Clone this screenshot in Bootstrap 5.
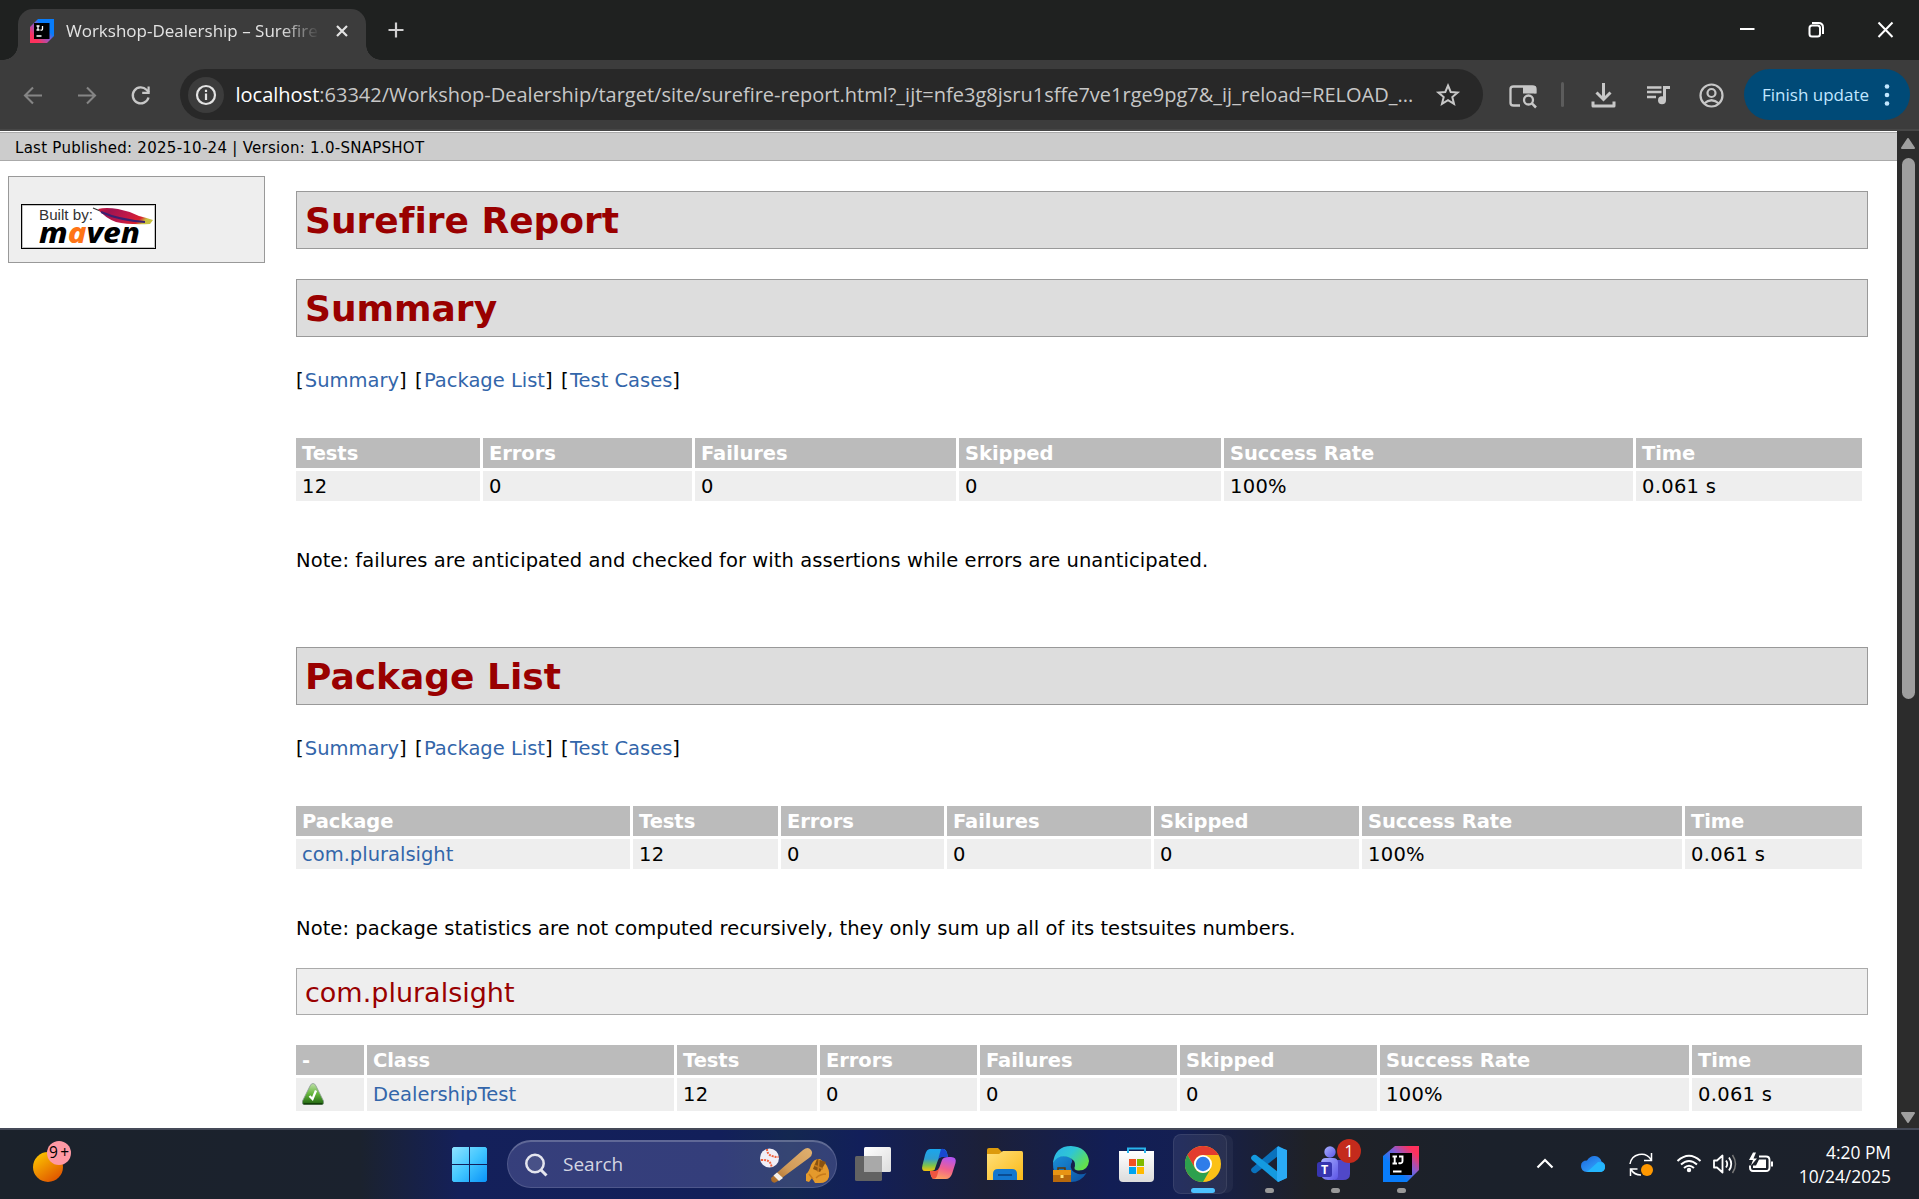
<!DOCTYPE html>
<html lang="en">
<head>
<meta charset="utf-8">
<title>Workshop-Dealership – Surefire Report</title>
<link href="https://cdn.jsdelivr.net/npm/bootstrap@5.3.0/dist/css/bootstrap.min.css" rel="stylesheet">
<style>
html,body{height:1199px;overflow:hidden}
body{font-family:"Open Sans","Noto Sans",sans-serif;color:#000;background:#fff;width:1919px}
svg{display:block;flex:none}
/* browser chrome */
.tabstrip{height:60px;background:#1f2120;padding-left:3px}
.flare{width:15px;height:15px;flex:none}
.flare-l{background:radial-gradient(circle at 0 0,#1f2120 14.5px,#3c3c3c 15px)}
.flare-r{background:radial-gradient(circle at 100% 0,#1f2120 14.5px,#3c3c3c 15px)}
.browser-tab{width:348px;height:51px;background:#3c3c3c;border-radius:15px 15px 0 0;padding:0 17px 8px 12px}
.tab-title{width:254px;margin-left:12px;font-size:17px;color:#e3e3e3;white-space:nowrap;overflow:hidden;-webkit-mask-image:linear-gradient(90deg,#000 215px,transparent 254px);mask-image:linear-gradient(90deg,#000 215px,transparent 254px)}
.toolbar{height:71px;background:#3c3c3c;border-bottom:2px solid #474747;padding:0 9px 0 7px}
.omnibox{width:1303px;height:51px;border-radius:26px;background:#282828;margin-left:12px;padding:0 13px 0 8px}
.info-chip{width:36px;height:36px;border-radius:50%;background:#3c3c3c}
.address{font-size:20px;color:#c7c7c7;margin-left:11.5px;white-space:nowrap}
.address span{color:#fff}
.lens{margin-left:18px}
.bar-divider{width:3px;height:25px;border-radius:2px;background:#5c5c5c;margin:0 17px 0 16px}
.finish{width:166px;height:51px;border-radius:26px;background:#004a77;color:#c2e7ff;font-size:17px;padding:0 18px}
/* report */
.viewport{height:997px}
.report{font-family:"DejaVu Sans",Verdana,sans-serif;font-size:19.5px;line-height:29px;padding-top:1px;letter-spacing:.06px;overflow:hidden;font-variant-ligatures:none}
.crumbs{height:29px;background:#ccc;border:solid #aaa;border-width:1px 0;font-size:15px;letter-spacing:.27px;line-height:30px;padding-left:15px}
.side-panel{width:257px;height:87px;background:#eee;border:1px solid #999;margin:15px 0 0 8px;padding:27px 0 0 12px}
.content{width:1572px;margin-left:31px;padding-top:30px}
.sec{height:58px;margin:0 0 30px;border:1px solid #999;background:#ddd;color:#900;font-size:36px;font-weight:700;line-height:58px;padding-left:8px;letter-spacing:0}
.sec-next{margin-top:72px}
.pkg{height:47px;margin:25px 0 30px;border:1px solid #aaa;background:#eee;color:#900;font-size:27px;font-weight:400;line-height:47px;padding-left:8px;letter-spacing:0}
.jump{margin:-1px 0 43px;letter-spacing:0}
.jump b{font-weight:400;letter-spacing:1.15px}
.report a{color:#36a;text-decoration:none}
.note{margin:45px 0 0}
.grid{table-layout:fixed;border-collapse:separate;border-spacing:3px;margin:-3px;width:1572px}
.grid th,.grid td{height:30px;padding:1px 6px 0;line-height:29px;white-space:nowrap}
.grid th{background:#bbb;color:#fff;letter-spacing:-.06px}
.grid td{background:#eee;letter-spacing:.3px}
.grid td a{letter-spacing:0}
.grid.tall td{height:33px;padding-bottom:2px}
.scroll{width:22px;background:#2c2c2c;padding:7px 0 5px}
.thumb{width:13px;height:541px;border-radius:7px;background:#9f9f9f;margin-top:9px}
/* taskbar */
.taskbar{height:71px;border-top:2px solid #454a58;padding:0 28px 1px 32px;background:linear-gradient(90deg,#1b222b 0,#1b222e 360px,#14205a 460px,#121f5a 720px,#132750 790px,#121f5a 860px,#1c2038 985px,#121e55 1110px,#141f52 1180px,#1f2126 1310px,#1b212b 1480px,#1c212b 100%)}
.weather{width:40px;height:45px;margin:0 380px 5px 0}
.search-pill{width:330px;height:48px;border-radius:24px;background:rgba(190,190,255,.2);border:1px solid #ffffff22;border-top:2px solid #ffffff38;margin:0 18px 0 20px;padding:0 6px 0 16px;color:#d4d6e2;font-size:19px;gap:15px}
.app{position:relative;width:36px;height:60px;margin-right:30px}
.app.running::after{content:"";position:absolute;left:14px;bottom:1px;width:9px;height:5px;border-radius:3px;background:#999}
.app.active::before{content:"";position:absolute;left:-12px;top:0;width:54px;height:60px;border-radius:8px;background:#ffffff14;border:1px solid #ffffff14;box-shadow:7px 0 0 -1px #ffffff0c}
.app.active::after{left:6px;width:24px;background:#4cc2ff}
.app svg{position:relative}
.note-count{position:absolute;left:20px;top:5px;width:24px;height:24px;border-radius:50%;background:#c42b1c;color:#fff;font-size:16px;line-height:24px;text-align:center}
.clock{font-size:17.4px;line-height:24px;color:#fff;width:106px;padding-bottom:1px}
</style>
<script src="https://cdn.jsdelivr.net/npm/bootstrap@5.3.0/dist/js/bootstrap.bundle.min.js"></script>
</head>
<body class="d-flex flex-column">
<svg width="0" height="0" class="position-absolute"><defs>
<linearGradient id="ijA" x1="0" y1="1" x2="1" y2="0"><stop offset=".35" stop-color="#087cfa"/><stop offset=".6" stop-color="#8a5bd0"/><stop offset=".85" stop-color="#fe315d"/></linearGradient>
<linearGradient id="ijB" x1="0" y1="1" x2="1" y2="0"><stop offset=".2" stop-color="#fe315d"/><stop offset=".5" stop-color="#8a5bd0"/><stop offset=".65" stop-color="#087cfa"/></linearGradient>
<linearGradient id="win" x1="0" y1="0" x2="1" y2="1"><stop offset="0" stop-color="#8fe3ff"/><stop offset=".5" stop-color="#42c6ff"/><stop offset="1" stop-color="#0a93f8"/></linearGradient>
<linearGradient id="orb" x1="0" y1="0" x2=".7" y2="1"><stop offset="0" stop-color="#ffd000"/><stop offset="1" stop-color="#e05500"/></linearGradient>
<linearGradient id="white" x1="0" y1="0" x2="1" y2="1"><stop offset="0" stop-color="#fff"/><stop offset="1" stop-color="#ddd"/></linearGradient>
<linearGradient id="copA" x1="0" y1="0" x2="0" y2="1"><stop offset="0" stop-color="#1aa6ee"/><stop offset=".45" stop-color="#2f9ed0"/><stop offset=".75" stop-color="#7fc24a"/><stop offset="1" stop-color="#f4c20b"/></linearGradient>
<linearGradient id="copB" x1=".6" y1="0" x2=".3" y2="1"><stop offset="0" stop-color="#b455f0"/><stop offset=".5" stop-color="#f0608f"/><stop offset="1" stop-color="#ffa45c"/></linearGradient>
<linearGradient id="fold" x1="0" y1="0" x2="1" y2="1"><stop offset="0" stop-color="#ffe07a"/><stop offset="1" stop-color="#fbb917"/></linearGradient>
<linearGradient id="edgeT" x1="0" y1="0" x2="1" y2=".6"><stop offset="0" stop-color="#2bb0ea"/><stop offset=".5" stop-color="#2fc6d4"/><stop offset="1" stop-color="#62e04c"/></linearGradient>
<linearGradient id="edgeB" x1="0" y1="0" x2="1" y2="1"><stop offset="0" stop-color="#1a8fd8"/><stop offset="1" stop-color="#0c4fa0"/></linearGradient>
<linearGradient id="bag" x1="0" y1="0" x2="0" y2="1"><stop offset="0" stop-color="#fff"/><stop offset="1" stop-color="#dcdcdc"/></linearGradient>
<linearGradient id="tm" x1="0" y1="0" x2="1" y2="1"><stop offset="0" stop-color="#a9b1ff"/><stop offset="1" stop-color="#5b54e6"/></linearGradient>
<linearGradient id="cloud" x1="0" y1="0" x2="1" y2="1"><stop offset="0" stop-color="#1b63d8"/><stop offset=".5" stop-color="#2a8cf0"/><stop offset="1" stop-color="#25c1ff"/></linearGradient>
<linearGradient id="bat" x1="1" y1="0" x2="0" y2="1"><stop offset="0" stop-color="#e0b070"/><stop offset=".6" stop-color="#d09a58"/><stop offset="1" stop-color="#a56420"/></linearGradient>
<linearGradient id="tri" x1="0" y1="0" x2="0" y2="1"><stop offset="0" stop-color="#bfe0a8"/><stop offset=".5" stop-color="#63b53a"/><stop offset="1" stop-color="#1f6210"/></linearGradient>
<linearGradient id="feather" x1="0" y1="0" x2="1" y2=".3"><stop offset="0" stop-color="#d01838"/><stop offset=".25" stop-color="#a01450"/><stop offset=".6" stop-color="#c01848"/><stop offset=".88" stop-color="#d9202c"/><stop offset="1" stop-color="#c8c040"/></linearGradient>
</defs></svg>

<header class="tabstrip d-flex flex-shrink-0">
  <div class="flare flare-l align-self-end"></div>
  <div class="browser-tab align-self-end d-flex align-items-center">
    <svg width="24" height="24" viewBox="0 0 24 24"><path d="M0 8 8 0H24V17L17 24H0Z" fill="url(#ijB)"/><path d="M4 4H19.500V20H4Z" fill="#000"/><path d="M6.500 7H9.500M8 7V11M6.500 11H9.500M12.500 7V10Q12.500 11.500 10.500 11M6.500 17H11.500" stroke="#fff" stroke-width="1.300" fill="none"/></svg>
    <div class="tab-title">Workshop-Dealership – Surefire Report</div>
    <svg class="ms-auto" width="14" height="14" viewBox="0 0 14 14"><path d="M2 2 12 12M12 2 2 12" stroke="#e3e3e3" stroke-width="2.200"/></svg>
  </div>
  <div class="flare flare-r align-self-end"></div>
  <svg width="30" height="60" viewBox="0 0 30 60"><path d="M15 22.500V37.500M7.500 30H22.500" stroke="#d0d0d0" stroke-width="2.200"/></svg>
  <div class="ms-auto d-flex">
    <svg width="69" height="60" viewBox="0 0 69 60"><path d="M28 29H42.500" stroke="#fff" stroke-width="2"/></svg>
    <svg width="69" height="60" viewBox="0 0 69 60"><rect x="28.500" y="25.500" width="10.500" height="11" rx="2.500" fill="none" stroke="#fff" stroke-width="2"/><path d="M31 23H37.500Q42 23 42 27.500V34" fill="none" stroke="#fff" stroke-width="2"/></svg>
    <svg width="69" height="60" viewBox="0 0 69 60"><path d="M28.500 22.500 42.500 37M42.500 22.500 28.500 37" stroke="#fff" stroke-width="2"/></svg>
  </div>
</header>

<div class="toolbar d-flex align-items-center flex-shrink-0">
  <svg width="53" height="40" viewBox="0 0 53 40"><path d="M35 20.500H18.500M26 12.500 18 20.500 26 28.500" fill="none" stroke="#858585" stroke-width="2.100"/></svg>
  <svg width="53" height="40" viewBox="0 0 53 40"><path d="M18 20.500H34.500M27 12.500 35 20.500 27 28.500" fill="none" stroke="#858585" stroke-width="2.100"/></svg>
  <svg width="55" height="40" viewBox="0 0 55 40"><path d="M35.500 22.500A8 8 0 1 1 33.500 14.800L36 17.500" fill="none" stroke="#c7c7c7" stroke-width="2.300"/><path d="M36.700 11.500V19H29.200V16.800H34.500V11.500Z" fill="#c7c7c7"/></svg>
  <div class="omnibox d-flex align-items-center">
    <div class="info-chip d-flex align-items-center justify-content-center"><svg width="22" height="22" viewBox="0 0 22 22"><circle cx="11" cy="11" r="9" fill="none" stroke="#e3e3e3" stroke-width="2.200"/><path d="M11 9.500V16M11 5.800V8" stroke="#e3e3e3" stroke-width="2.200"/></svg></div>
    <div class="address"><span>localhost</span>:63342/Workshop-Dealership/target/site/surefire-report.html?_ijt=nfe3g8jsru1sffe7ve1rge9pg7&amp;_ij_reload=RELOAD_...</div>
    <svg class="ms-auto me-2" width="28" height="28" viewBox="0 0 28 28"><path d="M14 4.500 16.700 11 23.600 11.500 18.300 16 20 22.800 14 19.100 8 22.800 9.700 16 4.400 11.500 11.300 11Z" fill="none" stroke="#c7c7c7" stroke-width="2"/></svg>
  </div>
  <svg class="lens" width="44" height="40" viewBox="0 0 44 40"><path d="M19 30.500H12.500Q9.500 30.500 9.500 28V14Q9.500 11.500 12.500 11.500H31.500Q34.500 11.500 34.500 14V18.500" fill="none" stroke="#c7c7c7" stroke-width="2.300"/><path d="M22 11H34.500V18.500H22Z" fill="#c7c7c7"/><circle cx="27.500" cy="25" r="4.500" fill="none" stroke="#c7c7c7" stroke-width="2.300"/><path d="M30.700 28.200 35 32.500" stroke="#c7c7c7" stroke-width="2.500"/></svg>
  <div class="bar-divider"></div>
  <svg width="44" height="40" viewBox="0 0 44 40"><path d="M22.500 8V24M15.500 17.500 22.500 24.500 29.500 17.500" fill="none" stroke="#c7c7c7" stroke-width="3"/><path d="M12 26.500V31H33V26.500" fill="none" stroke="#c7c7c7" stroke-width="3" stroke-linejoin="round"/></svg>
  <svg class="ms-2" width="50" height="40" viewBox="0 0 50 40"><path d="M14 12.500H28.500M14 17H28.500M14 22H23" stroke="#c7c7c7" stroke-width="2.300"/><path d="M31.500 25V12.500H37" fill="none" stroke="#c7c7c7" stroke-width="3"/><circle cx="29" cy="25.300" r="4" fill="#c7c7c7"/></svg>
  <svg class="ms-1" width="46" height="40" viewBox="0 0 46 40"><circle cx="24.500" cy="20.500" r="11" fill="none" stroke="#c7c7c7" stroke-width="2.200"/><circle cx="24.500" cy="18" r="4" fill="none" stroke="#c7c7c7" stroke-width="2.200"/><path d="M17 28.500Q24.500 22 32 28.500" fill="none" stroke="#c7c7c7" stroke-width="2.200"/></svg>
  <div class="finish d-flex align-items-center justify-content-between ms-auto"><span>Finish update</span><svg width="10" height="24" viewBox="0 0 10 24" fill="#c2e7ff"><circle cx="5" cy="3.500" r="2.300"/><circle cx="5" cy="12" r="2.300"/><circle cx="5" cy="20.500" r="2.300"/></svg></div>
</div>

<div class="viewport d-flex flex-shrink-0">
  <main class="report flex-grow-1">
    <div class="crumbs">Last Published: 2025-10-24 | Version: 1.0-SNAPSHOT</div>
    <div class="d-flex align-items-start">
      <aside class="side-panel flex-shrink-0">
        <svg width="135" height="45" viewBox="0 0 135 45" font-family="Liberation Sans, Arial, sans-serif" letter-spacing="0"><rect x=".5" y=".5" width="134" height="44" fill="#fff" stroke="#000"/><rect x="1.500" y="1.500" width="132" height="42" fill="none" stroke="#aaa" stroke-width=".7"/>
        <text x="18" y="16" font-size="15" fill="#333" textLength="54" lengthAdjust="spacingAndGlyphs">Built by:</text>
        <path d="M72 4 84 9" stroke="#333" stroke-width="1.300"/><path d="M77 5Q85 3 97 5Q108 7 118 12Q126 14 132 16L129 20Q108 21 95 18Q84 14 77 5Z" fill="url(#feather)"/><path d="M80 8Q98 16 124 18" stroke="#3b2070" stroke-width="2" fill="none"/>
        <text x="18" y="39" font-family="Noto Sans, sans-serif" font-size="29" font-weight="800" font-style="italic" fill="#000" textLength="101" lengthAdjust="spacingAndGlyphs">m<tspan fill="#ff7416">a</tspan>ven</text></svg>
      </aside>
      <section class="content flex-shrink-0">
        <h2 class="sec">Surefire Report</h2>
        <h2 class="sec">Summary</h2>
        <p class="jump"><b>[</b><a href="#">Summary</a><b>] [</b><a href="#">Package List</a><b>] [</b><a href="#">Test Cases</a><b>]</b></p>
        <table class="grid">
          <colgroup><col width="184"><col width="209"><col width="261"><col width="262"><col width="409"><col width="226"></colgroup>
          <tr><th>Tests</th><th>Errors</th><th>Failures</th><th>Skipped</th><th>Success Rate</th><th>Time</th></tr>
          <tr><td>12</td><td>0</td><td>0</td><td>0</td><td>100%</td><td>0.061 s</td></tr>
        </table>
        <p class="note">Note: failures are anticipated and checked for with assertions while errors are unanticipated.</p>
        <h2 class="sec sec-next">Package List</h2>
        <p class="jump"><b>[</b><a href="#">Summary</a><b>] [</b><a href="#">Package List</a><b>] [</b><a href="#">Test Cases</a><b>]</b></p>
        <table class="grid">
          <colgroup><col width="334"><col width="145"><col width="163"><col width="204"><col width="205"><col width="320"><col width="177"></colgroup>
          <tr><th>Package</th><th>Tests</th><th>Errors</th><th>Failures</th><th>Skipped</th><th>Success Rate</th><th>Time</th></tr>
          <tr><td><a href="#">com.pluralsight</a></td><td>12</td><td>0</td><td>0</td><td>0</td><td>100%</td><td>0.061 s</td></tr>
        </table>
        <p class="note">Note: package statistics are not computed recursively, they only sum up all of its testsuites numbers.</p>
        <h3 class="pkg">com.pluralsight</h3>
        <table class="grid tall">
          <colgroup><col width="68"><col width="307"><col width="140"><col width="157"><col width="197"><col width="197"><col width="309"><col width="170"></colgroup>
          <tr><th>-</th><th>Class</th><th>Tests</th><th>Errors</th><th>Failures</th><th>Skipped</th><th>Success Rate</th><th>Time</th></tr>
          <tr><td><svg width="22" height="22" viewBox="0 0 22 22"><path d="M11 .5Q13 .5 14 3L21.500 18Q22.500 21.500 20 21.500H2Q-.5 21.500 .5 18L8 3Q9 .5 11 .5Z" fill="url(#tri)" stroke="#8a9a94" stroke-width=".8"/><path d="M1.500 20.800H20.500" stroke="#123f08" stroke-width="1.500"/><path d="M7.500 13 10.500 16 14 7.500" fill="none" stroke="#fff" stroke-width="2.300"/></svg></td><td><a href="#">DealershipTest</a></td><td>12</td><td>0</td><td>0</td><td>0</td><td>100%</td><td>0.061 s</td></tr>
        </table>
      </section>
    </div>
  </main>
  <div class="scroll flex-shrink-0 d-flex flex-column align-items-center">
    <svg width="14" height="11" viewBox="0 0 14 11"><path d="M7 1 13 10H1Z" fill="#9f9f9f" stroke="#9f9f9f" stroke-width="2" stroke-linejoin="round"/></svg>
    <div class="thumb"></div>
    <svg class="mt-auto" width="14" height="11" viewBox="0 0 14 11"><path d="M7 10 13 1H1Z" fill="#9f9f9f" stroke="#9f9f9f" stroke-width="2" stroke-linejoin="round"/></svg>
  </div>
</div>

<footer class="taskbar d-flex align-items-center flex-shrink-0">
  <svg class="weather" viewBox="0 0 40 45"><circle cx="16" cy="28" r="15" fill="url(#orb)"/><circle cx="27" cy="14" r="12" fill="#ff99a4"/><text x="17" y="19" font-size="15.500" fill="#000" textLength="20" font-family="Open Sans, sans-serif">9+</text></svg>
  <svg width="35" height="35" viewBox="0 0 35 35"><path d="M1.500 0H17V17H0V1.500ZM18 0H33.500L35 1.500V17H18ZM0 18H17V35H1.500L0 33.500ZM18 18H35V33.500L33.500 35H18Z" fill="url(#win)"/></svg>
  <div class="search-pill d-flex align-items-center">
    <svg width="24" height="24" viewBox="0 0 24 24"><circle cx="11" cy="10.500" r="8.700" fill="#ffffff18" stroke="#e4e5ee" stroke-width="2.500"/><path d="M17 17 22.500 22.500" stroke="#e4e5ee" stroke-width="3"/></svg>
    <span>Search</span>
    <svg class="ms-auto" width="70" height="36" viewBox="0 0 70 36"><circle cx="9.500" cy="11" r="9.500" fill="#f0eef6"/><path d="M7 2Q7 10 18.500 10M1 13Q11 12 11.500 20" fill="none" stroke="#f0603c" stroke-width="2" stroke-dasharray="2 1"/><path d="M11 31 43 3Q48-1 51 3Q54 7 49 11L17 34.500Q14 37 11.500 34Z" fill="url(#bat)"/><path d="M17 25.500 23 31 19 34 13.500 28.500Z" fill="#f5f0ea"/><path d="M46 34V27Q49 25 51 18Q54 11 60 12L65 16Q70 22 69 30Q67 36 60 36H55L52 31 49 35Z" fill="#e49a2c"/><path d="M53 22 57 12 66 15 60 25Z" fill="#8a5210"/><path d="M54 18 63 22M59 13 58 25M56 31Q60 27 66 27M49 27 53 32" stroke="#c57a1c" stroke-width="1.500" fill="none"/></svg>
  </div>
  <div class="app d-flex align-items-center"><svg width="36" height="36" viewBox="0 0 36 36"><rect x="9" y="1" width="27" height="25" rx="1.500" fill="url(#white)"/><rect x="0" y="10" width="27" height="25" rx="1.500" fill="#626262"/><path d="M9 10H27V26H9Z" fill="#a9a9a9"/></svg></div>
  <div class="app d-flex align-items-center"><svg width="36" height="36" viewBox="0 0 36 36"><path d="M9 3H22Q25 3 26 7L27 11H21Q18 11 17 14L13.500 24Q12 25 8 25H4Q0 25 1.500 19L4 9Q5.500 3 9 3Z" fill="url(#copA)"/><path d="M20 3Q24 2 26 7L27 11H21Q18 11 17 14Z" fill="#1848d0"/><path d="M28 11H30Q36 11 34.500 17L31 28Q29 33 25 33H13Q10 33 9 25H14Q17 25 18.500 21L21 14Q22 11 28 11Z" fill="url(#copB)"/><path d="M9 25H14Q17 25 18.500 21L16 30Q15 33 12 33Q10 31 9 25Z" fill="#ee5540"/></svg></div>
  <div class="app d-flex align-items-center"><svg width="36" height="36" viewBox="0 0 36 36"><path d="M0 4Q0 2 2 2H11L15 6V12H0Z" fill="#dc9a0c"/><path d="M0 8H12L16 5H34.500Q36 5 36 7V34H0Z" fill="url(#fold)"/><path d="M6 34V28Q6 23 11 23H25Q30 23 30 28V34Z" fill="#1377cf"/><path d="M11 29H25" stroke="#0a4c92" stroke-width="2"/></svg></div>
  <div class="app d-flex align-items-center"><svg width="36" height="36" viewBox="0 0 36 36"><path d="M0 18Q0 9 12 10Q22 12 18 18Q16 25 25 28Q30 29 33.500 27Q28 36 18 36Q0 36 0 18Z" fill="url(#edgeB)"/><path d="M0 17Q2 0 18 0Q34 1 36 15Q35 25 25 24.500Q20 24 22 20Q23 14 15 11Q5 8 0 17Z" fill="url(#edgeT)"/><rect y="24" width="18" height="12" fill="#b8690c"/><path d="M0 24H18V29H0Z" fill="#e89414"/><path d="M5 24V22H12V24" fill="none" stroke="#5c3606" stroke-width="1.500"/><rect x="7.500" y="29" width="3" height="3" fill="#ffe070"/></svg></div>
  <div class="app d-flex align-items-center"><svg width="36" height="36" viewBox="0 0 36 36"><path d="M0 5H35V32Q35 36 31 36H4Q0 36 0 32Z" fill="url(#bag)"/><path d="M9 7V2.500H26V7" fill="none" stroke="#28b4ec" stroke-width="2"/><path d="M10 13H17V20H10Z" fill="#f25022"/><path d="M18 13H25V20H18Z" fill="#7fba00"/><path d="M10 21H17V28H10Z" fill="#00a4ef"/><path d="M18 21H25V28H18Z" fill="#ffb900"/></svg></div>
  <div class="app running active d-flex align-items-center"><svg width="36" height="36" viewBox="0 0 36 36"><circle cx="18" cy="18" r="18" fill="#fbc116"/><path d="M2.410 9A18 18 0 0 1 33.600 9H18A9 9 0 0 0 10.200 22.500Z" fill="#e33b2e"/><path d="M2.410 9A18 18 0 0 0 18 36L25.800 22.500A9 9 0 0 1 10.200 22.500Z" fill="#2da04e"/><circle cx="18" cy="18" r="9" fill="#fff"/><circle cx="18" cy="18" r="7.200" fill="#2f7de9"/></svg></div>
  <div class="app running d-flex align-items-center"><svg width="36" height="36" viewBox="0 0 36 36"><path d="M27 0 35 4V32L27 36Z" fill="#27a7f0"/><path d="M27 0V10L5 27Q3 28 1 26Q-1 24 1 22Z" fill="#0a72bd"/><path d="M27 36V26L5 9Q3 8 1 10Q-1 12 1 14Z" fill="#149ae0"/><path d="M26 1 36 4V32L27 36 26 34Z" fill="#2aaaf5"/></svg></div>
  <div class="app running d-flex align-items-center"><svg width="36" height="36" viewBox="0 0 36 36"><circle cx="13" cy="6" r="5.700" fill="url(#tm)"/><path d="M19 14H33V28Q33 34 26 34H17Z" fill="#5048c8"/><path d="M4 17Q4 12 9 12H16Q21 12 21 17V30Q21 34 15 34H11Q4 34 4 27Z" fill="url(#tm)"/><rect y="16" width="15" height="15" rx="2.500" fill="#3735b0"/><text x="4" y="28" font-size="12.500" font-weight="700" fill="#fff" font-family="Open Sans, sans-serif">T</text></svg><span class="note-count">1</span></div>
  <div class="app running d-flex align-items-center"><svg width="36" height="36" viewBox="0 0 36 36"><path d="M0 10 12 0H36V24L24 36H0Z" fill="url(#ijA)"/><path d="M7 7H29V29H7Z" fill="#000"/><path d="M9.500 10.500H14M11.700 10.500V17.500M9.500 17.500H14M16 10.500H19.500V15Q19.500 18 15.500 17M10 25.500H18.500" fill="none" stroke="#fff" stroke-width="1.900"/></svg></div>
  <div class="ms-auto d-flex align-items-center">
    <svg width="48" height="40" viewBox="0 0 48 40"><path d="M16.500 23.500 24 16 31.500 23.500" fill="none" stroke="#fff" stroke-width="2.200"/></svg>
    <svg width="48" height="40" viewBox="0 0 48 40"><path d="M18 28Q12 27.500 12 22Q12 16.500 18 16.500Q21 11.500 26 12Q31 12.500 32.500 17.500Q36 19 36 22.500Q36 28 30 28Z" fill="url(#cloud)"/><path d="M18 28 29 18Q36 18 36 23Q36 28 30 28Z" fill="#24b6fd"/></svg>
    <svg width="48" height="40" viewBox="0 0 48 40"><path d="M13 20A11.500 11.500 0 0 1 34 15.500M34.500 9V16.500H27M24 31A11.500 11.500 0 0 1 14 25.500M13.500 32V25H20.500" fill="none" stroke="#fff" stroke-width="1.500"/><circle cx="30" cy="26" r="6" fill="#ff9800"/></svg>
    <svg width="48" height="40" viewBox="0 0 48 40"><path d="M12.500 17Q24 6.500 35.500 17M16 20.500Q24 13.500 32 20.500M19 24Q24 19.500 29 24" fill="none" stroke="#fff" stroke-width="2"/><circle cx="24" cy="26" r="2.200" fill="#fff"/></svg>
    <svg width="24" height="40" viewBox="0 0 24 40"><path d="M1 16.500H4L9.500 11.500V28.500L4 23.500H1Z" fill="none" stroke="#fff" stroke-width="1.800" stroke-linejoin="round"/><path d="M13 16.500Q15.500 20 13 23.500M16 13.500Q20.500 20 16 26.500" fill="none" stroke="#fff" stroke-width="1.800"/><path d="M19.500 11Q25.500 20 19.500 29" fill="none" stroke="#777" stroke-width="1.500"/></svg>
    <svg width="48" height="40" viewBox="0 0 48 40"><path d="M22 12.500H29Q32.500 12.500 32.500 16V23.500Q32.500 27 29 27H16Q13 27 13 23.500V21.500" fill="none" stroke="#fff" stroke-width="1.900"/><path d="M22 15.500H29V24H16V21.500H19Z" fill="#fff"/><path d="M34 17.500H36V22.500H34Z" fill="#fff"/><path d="M16 8.500 12 16H16L14 21.500 20 14.500H16.500L19 8.500Z" fill="#fff"/></svg>
    <div class="clock text-end">4:20 PM<br>10/24/2025</div>
  </div>
</footer>
</body>
</html>
